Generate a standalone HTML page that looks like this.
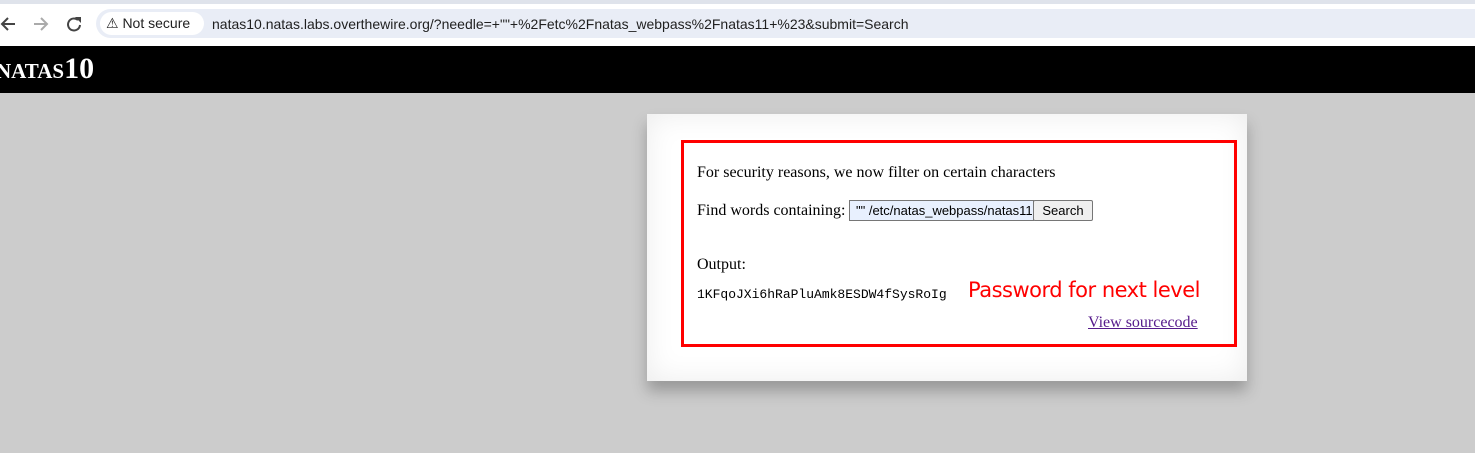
<!DOCTYPE html>
<html><head><style>
*{margin:0;padding:0;box-sizing:border-box}
body{width:1475px;height:453px;background:#ccc;position:relative;overflow:hidden;font-family:"Liberation Serif",serif}
.abs{position:absolute}
#top{left:0;top:0;width:1475px;height:46px;background:#fff}
#tabline{left:0;top:0;width:1475px;height:4px;background:#dfe3eb}
#url{left:96px;top:9px;width:1400px;height:29px;border-radius:15px;background:#e9edf6}
#chip{left:100px;top:12px;width:104px;height:23px;border-radius:12px;background:#fff;font:14px "Liberation Sans",sans-serif;color:#1f1f1f;line-height:23px;padding-left:6px}
#urltext{left:212px;top:16px;font:14px "Liberation Sans",sans-serif;color:#1f1f1f;white-space:nowrap}
#bar{left:0;top:46px;width:1475px;height:47px;background:#000;color:#fff;font-weight:bold}
#panel{left:647px;top:114px;width:600px;height:267px;background:#fff;box-shadow:inset 0 0 30px rgba(0,0,0,.08),0 10px 14px rgba(0,0,0,.25)}
#red{left:681px;top:140px;width:556px;height:207px;border:3px solid #f00}
.t{font-size:16px;color:#000;white-space:nowrap}
</style></head><body>
<div class="abs" id="top"></div>
<div class="abs" id="tabline"></div>
<svg class="abs" style="left:0;top:14px" width="90" height="20" viewBox="0 0 90 20">
<path d="M15 10H3M8 4L2 10l6 6" stroke="#444" stroke-width="2" fill="none"/>
<path d="M34 10h12M41 4l6 6-6 6" stroke="#aaa" stroke-width="2" fill="none"/>
<path d="M78 6a6 6 0 1 0 2 5" stroke="#444" stroke-width="2" fill="none"/><path d="M75 3h6v6z" fill="#444"/>
</svg>
<div class="abs" id="url"></div>
<div class="abs" id="chip">⚠ Not secure</div>
<div class="abs" id="urltext">natas10.natas.labs.overthewire.org/?needle=+""+%2Fetc%2Fnatas_webpass%2Fnatas11+%23&amp;submit=Search</div>
<div class="abs" id="bar"><span class="abs" style="left:-4px;top:8px;font-size:21px;line-height:30px">NATAS<span style="font-size:30px">10</span></span></div>
<div class="abs" id="panel"></div>
<div class="abs" id="red"></div>
<div class="abs t" style="left:697px;top:164px">For security reasons, we now filter on certain characters</div>
<div class="abs t" style="left:697px;top:202px">Find words containing:</div>
<div class="abs" style="left:849px;top:200px;width:185px;height:21px;border:1px solid #767676;background:#e8f0fe;font:13px 'Liberation Sans',sans-serif;line-height:19px;padding-left:6px;overflow:hidden;white-space:nowrap">"" /etc/natas_webpass/natas11</div>
<div class="abs" style="left:1033px;top:200px;width:60px;height:21px;border:1px solid #767676;border-radius:2px;background:#efefef;font:13px 'Liberation Sans',sans-serif;line-height:19px;text-align:center">Search</div>
<div class="abs t" style="left:697px;top:256px">Output:</div>
<div class="abs" style="left:697px;top:287px;font:13px 'Liberation Mono',monospace">1KFqoJXi6hRaPluAmk8ESDW4fSysRoIg</div>
<div class="abs" style="left:968px;top:278px;font:21px 'DejaVu Sans','Liberation Sans',sans-serif;color:#f00;white-space:nowrap;letter-spacing:-0.5px">Password for next level</div>
<div class="abs t" style="left:1088px;top:314px;color:#551a8b;text-decoration:underline">View sourcecode</div>
</body></html>
